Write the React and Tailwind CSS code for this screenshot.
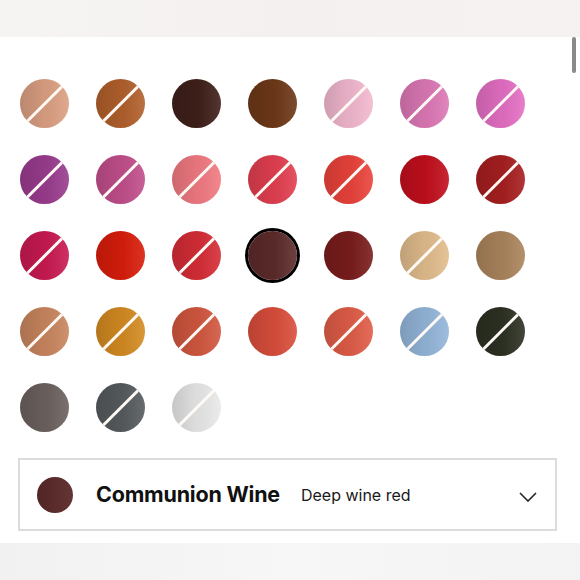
import { useState } from "react";

const tonos = [
  { c: "#dca083", s: true }, { c: "#b2602c", s: true }, { c: "#40201a", s: false },
  { c: "#6e3818", s: false }, { c: "#f3b8cf", s: true }, { c: "#dd78b6", s: true },
  { c: "#e56fc4", s: true },
  { c: "#9a3c8e", s: true }, { c: "#c24f8c", s: true }, { c: "#f27a82", s: true },
  { c: "#e23f50", s: true }, { c: "#ea433b", s: true }, { c: "#c20f1d", s: false },
  { c: "#a71f20", s: true },
  { c: "#c91a52", s: true }, { c: "#d91d0b", s: false }, { c: "#d62d36", s: true },
  { c: "#5d2b2b", s: false, nombre: "Communion Wine", desc: "Deep wine red" },
  { c: "#7a1d1c", s: false }, { c: "#e2bd8d", s: true }, { c: "#ab855c", s: false },
  { c: "#c9865e", s: true }, { c: "#d48b22", s: true }, { c: "#d2573f", s: true },
  { c: "#da4e3c", s: false }, { c: "#e05d48", s: true }, { c: "#94b6da", s: true },
  { c: "#2d3122", s: true },
  { c: "#6c625f", s: false }, { c: "#565b5e", s: true }, { c: "#e9e9e9", s: true },
];

function Muestra({ tono, activo, onClick }) {
  return (
    <button
      onClick={onClick}
      className={`relative w-[49px] h-[49px] rounded-full flex items-center justify-center ${
        activo ? "ring-[3px] ring-black ring-offset-0" : ""
      }`}
    >
      <span
        className="absolute inset-0 rounded-full overflow-hidden bg-linear-to-r from-black/15 via-black/5 to-white/10"
        style={{ backgroundColor: tono.c }}
      >
        {tono.s && (
          <span className="absolute left-1/2 top-1/2 w-[60px] h-[3px] -ml-[30px] -mt-[1.5px] bg-[#fffaf6] -rotate-45" />
        )}
      </span>
    </button>
  );
}

export default function App() {
  const [sel, setSel] = useState(17);
  const actual = tonos[sel];

  return (
    <div className="relative w-[580px] h-[580px] bg-white overflow-hidden font-['Inter',sans-serif]">
      <div className="h-[37px] bg-linear-to-r from-[#f6f3f3] via-[#f4f0f0] to-[#f6f2f2]" />

      <div className="absolute right-[4px] top-[37px] w-[4px] h-[36px] rounded-full bg-[#8a8a8a]" />

      <div className="pt-[42px] pl-[20px] grid grid-cols-[repeat(7,49px)] gap-x-[27px] gap-y-[27px]">
        {tonos.map((t, i) => (
          <Muestra key={i} tono={t} activo={i === sel} onClick={() => setSel(i)} />
        ))}
      </div>

      <div className="mt-[26px] ml-[18px] w-[539px] h-[73px] border-2 border-[#dcdcdc] flex items-center pl-[17px] pr-[18px]">
        <span
          className="w-[36px] h-[36px] rounded-full bg-linear-to-r from-black/10 to-white/5"
          style={{ backgroundColor: actual.c }}
        />
        <span className="ml-[23px] text-[21.5px] font-bold tracking-[-0.01em] text-[#111]">
          {actual.nombre || "Communion Wine"}
        </span>
        <span className="ml-[21px] text-[16px] text-[#1a1a1a] pt-[1px]">
          {actual.desc || "Deep wine red"}
        </span>
        <svg className="ml-auto mt-[4px]" width="18" height="10" viewBox="0 0 18 10" fill="none">
          <path d="M1 1l8 8 8-8" stroke="#222" strokeWidth="1.6" />
        </svg>
      </div>

      <div className="absolute left-0 right-0 bottom-0 h-[37px] bg-linear-to-r from-[#f1f1f1] via-[#f7f7f7] to-[#f3f3f3]" />
    </div>
  );
}
